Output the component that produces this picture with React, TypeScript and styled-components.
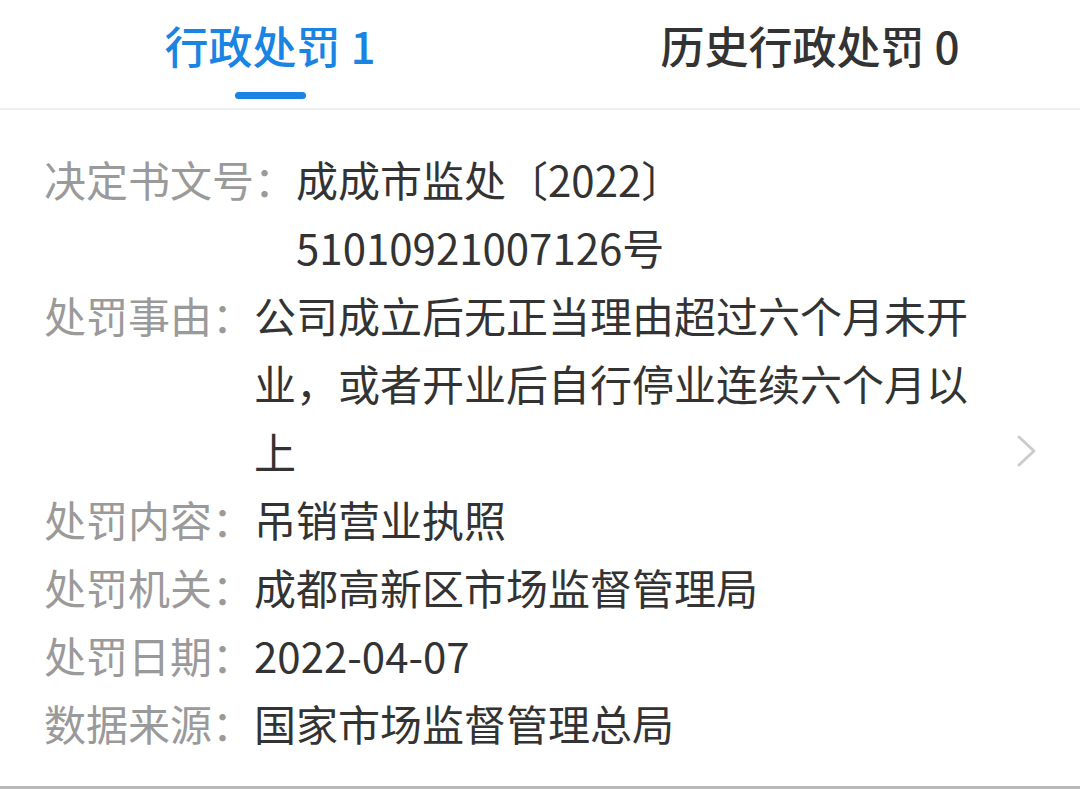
import React from 'react';
import styled, { createGlobalStyle } from 'styled-components';

const GlobalStyle = createGlobalStyle`
    html, body {
        margin: 0;
        padding: 0;
        background: #ffffff;
    }
    body {
        font-family: "Noto Sans CJK SC", "Noto Sans", sans-serif;
    }
`;

const Page = styled.div({
    width: '1080px',
    height: '789px',
    boxSizing: 'border-box',
    background: '#ffffff',
    borderBottom: '3px solid #b9b9b9',
    overflow: 'hidden'
});

const TabBar = styled.div({
    display: 'grid',
    gridTemplateColumns: '1fr 1fr',
    height: '110px',
    boxSizing: 'border-box',
    borderBottom: '2px solid #efefef'
});

const Tab = styled.div<{ $active?: boolean }>`
    display: flex;
    flex-direction: column;
    align-items: center;
    font-size: 44px;
    font-weight: 500;
    line-height: 90px;
    color: ${p => (p.$active ? '#1a84e3' : '#333333')};
`;

const Underline = styled.div({
    width: '71px',
    height: '7px',
    borderRadius: '4px',
    background: '#1a84e3',
    marginTop: '2px'
});

const Detail = styled.div({
    paddingTop: '35px'
});

const Body = styled.div({
    position: 'relative',
    padding: '0 90px 0 44px'
});

const Row = styled.div({
    display: 'flex',
    fontSize: '42px',
    lineHeight: '68px'
});

const Label = styled.span({
    color: '#9a9a9a',
    whiteSpace: 'nowrap'
});

const Value = styled.span({
    flex: 1,
    color: '#333333'
});

const Chevron = styled.div({
    position: 'absolute',
    right: '42px',
    top: '50%',
    transform: 'translateY(-50%)',
    display: 'flex'
});

const rows: [string, string][] = [
    ['决定书文号：', '成成市监处〔2022〕51010921007126号'],
    ['处罚事由：', '公司成立后无正当理由超过六个月未开业，或者开业后自行停业连续六个月以上'],
    ['处罚内容：', '吊销营业执照'],
    ['处罚机关：', '成都高新区市场监督管理局'],
    ['处罚日期：', '2022-04-07'],
    ['数据来源：', '国家市场监督管理总局']
];

export default function App() {
    return (
        <Page>
            <GlobalStyle />
            <TabBar>
                <Tab $active>
                    <span>行政处罚 1</span>
                    <Underline />
                </Tab>
                <Tab>
                    <span>历史行政处罚 0</span>
                </Tab>
            </TabBar>
            <Detail>
                <Body>
                    {rows.map(([label, value]) => (
                        <Row key={label}>
                            <Label>{label}</Label>
                            <Value>{value}</Value>
                        </Row>
                    ))}
                    <Chevron>
                        <svg width="22" height="34" viewBox="0 0 22 34" fill="none">
                            <path d="M3 3 L18 17 L3 31" stroke="#cccccc" strokeWidth="3" strokeLinecap="round" strokeLinejoin="round" />
                        </svg>
                    </Chevron>
                </Body>
            </Detail>
        </Page>
    );
}
